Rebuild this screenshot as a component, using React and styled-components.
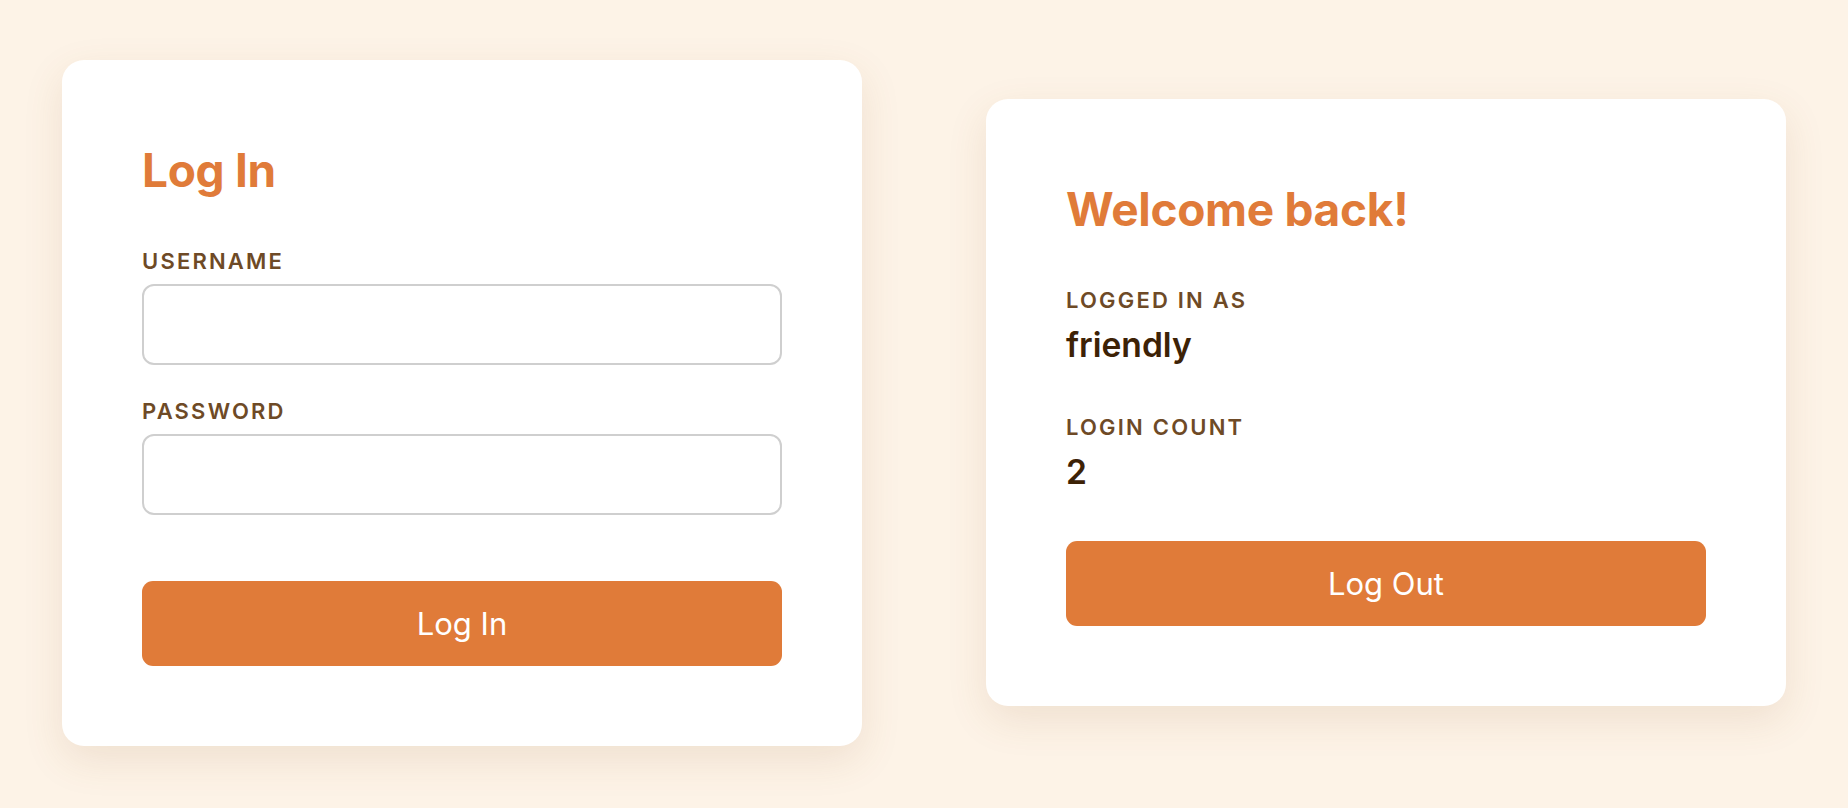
import styled, { createGlobalStyle } from "styled-components";

const GlobalStyle = createGlobalStyle`
  * {
    box-sizing: border-box;
  }
  body {
    margin: 0;
    background-color: #fdf3e7;
    font-family: Inter, "Noto Sans", sans-serif;
  }
`;

export default function App() {
  return (
    <>
      <GlobalStyle />
      <Page>
        <Card>
          <Title>Log In</Title>
          <Field>
            <Label htmlFor="username">Username</Label>
            <Input id="username" type="text" />
          </Field>
          <Field>
            <Label htmlFor="password">Password</Label>
            <Input id="password" type="password" />
          </Field>
          <Button $spaced>Log In</Button>
        </Card>
        <Card>
          <Title>Welcome back!</Title>
          <Stat>
            <Label as="div">Logged in as</Label>
            <Value>friendly</Value>
          </Stat>
          <Stat>
            <Label as="div">Login count</Label>
            <Value>2</Value>
          </Stat>
          <Button>Log Out</Button>
        </Card>
      </Page>
    </>
  );
}

const Page = styled.main`
  min-height: 100vh;
  padding-bottom: 3px;
  display: flex;
  align-items: center;
  justify-content: center;
  gap: 124px;
`;

const Card = styled.section`
  width: 800px;
  padding: 80px;
  background: #ffffff;
  border-radius: 22px;
  box-shadow: 0 14px 40px rgba(140, 90, 40, 0.12);
  display: flex;
  flex-direction: column;
`;

const Title = styled.h1`
  margin: 2px 0 50px;
  font-size: 46px;
  line-height: 56px;
  font-weight: 700;
  letter-spacing: -0.3px;
  color: #e07b39;
`;

const Field = styled.div`
  display: flex;
  flex-direction: column;
  gap: 10px;
  & + & {
    margin-top: 33px;
  }
`;

const Label = styled.label`
  font-size: 22px;
  line-height: 26px;
  font-weight: 600;
  letter-spacing: 0.1em;
  text-transform: uppercase;
  color: #6e4a26;
`;

const Input = styled.input`
  height: 81px;
  width: 100%;
  padding: 0 20px;
  border: 2px solid #cfcfcf;
  border-radius: 12px;
  font: inherit;
  font-size: 24px;
  background: #fff;
  outline: none;
`;

const Stat = styled.div`
  display: flex;
  flex-direction: column;
  gap: 11px;
  margin-bottom: 49px;
`;

const Value = styled.div`
  font-size: 33.6px;
  line-height: 41px;
  font-weight: 600;
  color: #3d2206;
`;

const Button = styled.button`
  height: 85px;
  width: 100%;
  margin-top: ${(p) => (p.$spaced ? "66px" : "0")};
  border: none;
  border-radius: 11px;
  background: #e07b39;
  color: #ffffff;
  font-family: Inter, "Noto Sans", sans-serif;
  font-size: 31px;
  font-weight: 400;
  cursor: pointer;
`;
